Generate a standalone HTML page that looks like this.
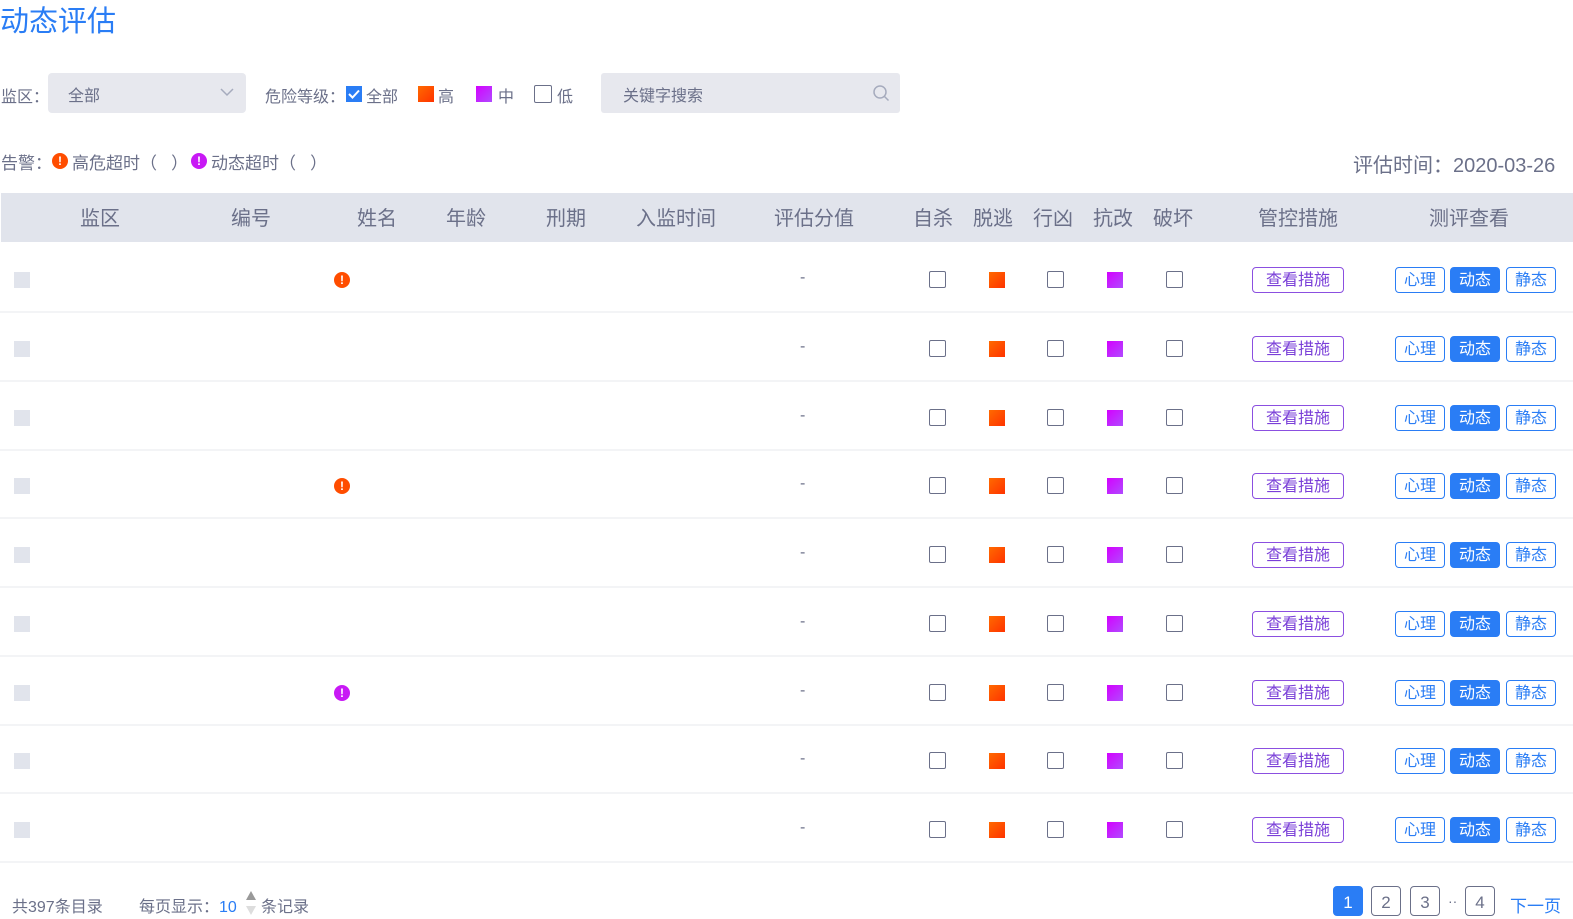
<!DOCTYPE html>
<html><head><meta charset="utf-8">
<style>
*{margin:0;padding:0;box-sizing:border-box}
body{width:1573px;height:919px;overflow:hidden;background:#fff;font-family:"Liberation Sans","Noto Sans CJK SC",sans-serif;color:#6b7089;position:relative;font-size:16px}
.a{position:absolute;white-space:nowrap}
.title{left:0;top:4px;font-size:29px;color:#2a7df5;line-height:36px}
.sel{left:48px;top:73px;width:198px;height:40px;background:#e7e8ee;border-radius:4px}
.srch{left:601px;top:73px;width:299px;height:40px;background:#e7e8ee;border-radius:3px}
.hdr{left:1px;top:193px;width:1572px;height:49px;background:#e1e4ec}
.h{top:194px;line-height:50px;font-size:20px;color:#6b7089;transform:translateX(-50%)}
.row{left:0;width:1573px;height:69px;border-bottom:2px solid #f3f4f6}
.row>*{position:absolute}
.ck{width:16px;height:16px;background:#e1e4ec;left:14px;top:28px}
.bx{width:17px;height:17px;border:1.5px solid #6b7089;border-radius:2px;top:27px}
.or{width:16px;height:16px;background:linear-gradient(135deg,#ff6a00,#ff3300);top:28px;left:989px}
.pu{width:16px;height:16px;background:linear-gradient(135deg,#d400ff,#b04bff);top:28px;left:1107px}
.dash{left:800px;top:25px;font-size:16px}
.btn{top:23px;left:1252px;width:92px;height:26px;border:1.5px solid #8b4fe0;border-radius:4px;color:#7a3fd8;font-size:16px;line-height:26px;text-align:center}
.b{top:23px;height:26px;width:50px;border:1.5px solid #2a7df5;border-radius:4px;color:#2a7df5;font-size:16px;line-height:26px;text-align:center}
.b.f{background:#2a7df5;color:#fff}
.ic{width:16px;height:16px;border-radius:50%;color:#fff;font-size:12px;font-weight:bold;text-align:center;line-height:16px;top:28px;left:334px}
.pg{top:886px;width:30px;height:30px;border:1.5px solid #6b7089;border-radius:4px;text-align:center;line-height:31px;font-size:17px}
</style></head><body>
<div class="a title">动态评估</div>
<div class="a" style="left:1px;top:83px;font-size:16px">监区：</div>
<div class="a sel"><span class="a" style="left:20px;top:9px">全部</span>
<svg class="a" style="left:172px;top:14px" width="14" height="10"><path d="M1 2l6 6 6-6" stroke="#a6abbd" stroke-width="1.5" fill="none"/></svg></div>
<div class="a" style="left:265px;top:83px">危险等级：</div>
<div class="a" style="left:346px;top:86px;width:16px;height:16px;background:#2a7df5"><svg width="16" height="16"><path d="M3 8l3.5 3.5L13 4.5" stroke="#fff" stroke-width="2" fill="none"/></svg></div>
<div class="a" style="left:366px;top:83px">全部</div>
<div class="a" style="left:418px;top:86px;width:16px;height:16px;background:linear-gradient(135deg,#ff6a00,#ff3300)"></div>
<div class="a" style="left:438px;top:83px">高</div>
<div class="a" style="left:476px;top:86px;width:16px;height:16px;background:linear-gradient(135deg,#d400ff,#b04bff)"></div>
<div class="a" style="left:498px;top:83px">中</div>
<div class="a" style="left:534px;top:85px;width:18px;height:18px;border:1.5px solid #6b7089;border-radius:2px"></div>
<div class="a" style="left:557px;top:83px">低</div>
<div class="a srch"><span class="a" style="left:22px;top:9px">关键字搜索</span>
<svg class="a" style="left:271px;top:11px" width="18" height="18"><circle cx="8" cy="8" r="6" stroke="#a6abbd" stroke-width="1.5" fill="none"/><path d="M12.5 12.5l4 4" stroke="#a6abbd" stroke-width="1.5"/></svg></div>
<div class="a" style="left:1px;top:149px;font-size:17px">告警：</div>
<div class="a" style="left:52px;top:153px;width:16px;height:16px;border-radius:50%;background:#ff4d00;color:#fff;font-size:12px;font-weight:bold;text-align:center;line-height:16px">!</div>
<div class="a" style="left:72px;top:149px;font-size:17px">高危超时（&nbsp;&nbsp;&nbsp;）</div>
<div class="a" style="left:191px;top:153px;width:16px;height:16px;border-radius:50%;background:#c819f5;color:#fff;font-size:12px;font-weight:bold;text-align:center;line-height:16px">!</div>
<div class="a" style="left:211px;top:149px;font-size:17px">动态超时（&nbsp;&nbsp;&nbsp;）</div>
<div class="a" style="left:1353px;top:149px;font-size:20px">评估时间：2020-03-26</div>
<div class="a hdr"><div style="position:absolute;left:13px;top:17px;width:16px;height:16px;background:#e1e4ec"></div></div>
<div class="a h" style="left:100px">监区</div><div class="a h" style="left:251px">编号</div><div class="a h" style="left:377px">姓名</div><div class="a h" style="left:466px">年龄</div><div class="a h" style="left:566px">刑期</div><div class="a h" style="left:676px">入监时间</div><div class="a h" style="left:814px">评估分值</div><div class="a h" style="left:933px">自杀</div><div class="a h" style="left:993px">脱逃</div><div class="a h" style="left:1053px">行凶</div><div class="a h" style="left:1113px">抗改</div><div class="a h" style="left:1173px">破坏</div><div class="a h" style="left:1298px">管控措施</div><div class="a h" style="left:1469px">测评查看</div>

<div class="a row" style="top:244px"><div class="ck"></div><div class="ic" style="background:#ff4d00">!</div><span class="dash">-</span><div class="bx" style="left:929px"></div><div class="or"></div><div class="bx" style="left:1047px"></div><div class="pu"></div><div class="bx" style="left:1166px"></div><div class="btn">查看措施</div><div class="b" style="left:1395px">心理</div><div class="b f" style="left:1450px">动态</div><div class="b" style="left:1506px">静态</div></div>
<div class="a row" style="top:313px"><div class="ck"></div><span class="dash">-</span><div class="bx" style="left:929px"></div><div class="or"></div><div class="bx" style="left:1047px"></div><div class="pu"></div><div class="bx" style="left:1166px"></div><div class="btn">查看措施</div><div class="b" style="left:1395px">心理</div><div class="b f" style="left:1450px">动态</div><div class="b" style="left:1506px">静态</div></div>
<div class="a row" style="top:382px"><div class="ck"></div><span class="dash">-</span><div class="bx" style="left:929px"></div><div class="or"></div><div class="bx" style="left:1047px"></div><div class="pu"></div><div class="bx" style="left:1166px"></div><div class="btn">查看措施</div><div class="b" style="left:1395px">心理</div><div class="b f" style="left:1450px">动态</div><div class="b" style="left:1506px">静态</div></div>
<div class="a row" style="top:450px"><div class="ck"></div><div class="ic" style="background:#ff4d00">!</div><span class="dash">-</span><div class="bx" style="left:929px"></div><div class="or"></div><div class="bx" style="left:1047px"></div><div class="pu"></div><div class="bx" style="left:1166px"></div><div class="btn">查看措施</div><div class="b" style="left:1395px">心理</div><div class="b f" style="left:1450px">动态</div><div class="b" style="left:1506px">静态</div></div>
<div class="a row" style="top:519px"><div class="ck"></div><span class="dash">-</span><div class="bx" style="left:929px"></div><div class="or"></div><div class="bx" style="left:1047px"></div><div class="pu"></div><div class="bx" style="left:1166px"></div><div class="btn">查看措施</div><div class="b" style="left:1395px">心理</div><div class="b f" style="left:1450px">动态</div><div class="b" style="left:1506px">静态</div></div>
<div class="a row" style="top:588px"><div class="ck"></div><span class="dash">-</span><div class="bx" style="left:929px"></div><div class="or"></div><div class="bx" style="left:1047px"></div><div class="pu"></div><div class="bx" style="left:1166px"></div><div class="btn">查看措施</div><div class="b" style="left:1395px">心理</div><div class="b f" style="left:1450px">动态</div><div class="b" style="left:1506px">静态</div></div>
<div class="a row" style="top:657px"><div class="ck"></div><div class="ic" style="background:#c819f5">!</div><span class="dash">-</span><div class="bx" style="left:929px"></div><div class="or"></div><div class="bx" style="left:1047px"></div><div class="pu"></div><div class="bx" style="left:1166px"></div><div class="btn">查看措施</div><div class="b" style="left:1395px">心理</div><div class="b f" style="left:1450px">动态</div><div class="b" style="left:1506px">静态</div></div>
<div class="a row" style="top:725px"><div class="ck"></div><span class="dash">-</span><div class="bx" style="left:929px"></div><div class="or"></div><div class="bx" style="left:1047px"></div><div class="pu"></div><div class="bx" style="left:1166px"></div><div class="btn">查看措施</div><div class="b" style="left:1395px">心理</div><div class="b f" style="left:1450px">动态</div><div class="b" style="left:1506px">静态</div></div>
<div class="a row" style="top:794px"><div class="ck"></div><span class="dash">-</span><div class="bx" style="left:929px"></div><div class="or"></div><div class="bx" style="left:1047px"></div><div class="pu"></div><div class="bx" style="left:1166px"></div><div class="btn">查看措施</div><div class="b" style="left:1395px">心理</div><div class="b f" style="left:1450px">动态</div><div class="b" style="left:1506px">静态</div></div>

<div class="a" style="left:12px;top:893px">共397条目录</div>
<div class="a" style="left:139px;top:893px">每页显示：<span style="color:#2a7df5">10</span></div>
<svg class="a" style="left:245px;top:890px" width="12" height="26"><path d="M6 1l5 9H1z" fill="#999"/><path d="M6 25l5-9H1z" fill="#ddd"/></svg>
<div class="a" style="left:261px;top:893px">条记录</div>
<div class="a pg" style="left:1333px;background:#2a7df5;border-color:#2a7df5;color:#fff">1</div>
<div class="a pg" style="left:1371px">2</div>
<div class="a pg" style="left:1410px">3</div>
<div class="a" style="left:1448px;top:893px;font-size:14px">··</div>
<div class="a pg" style="left:1465px">4</div>
<div class="a" style="left:1510px;top:892px;color:#2a7df5;font-size:17px">下一页</div>
</body></html>
